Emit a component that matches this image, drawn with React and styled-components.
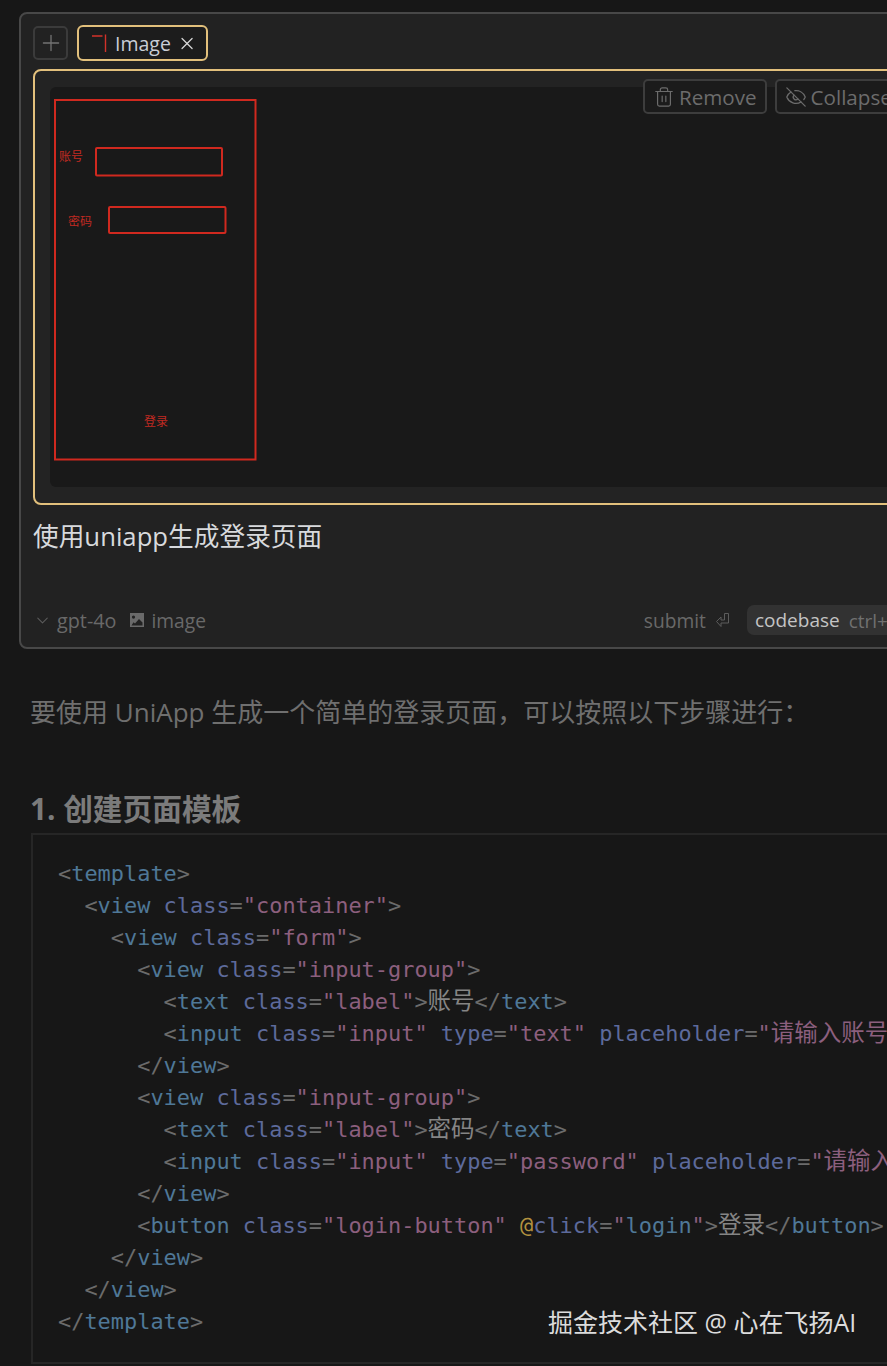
import React from "react";
import styled, { createGlobalStyle } from "styled-components";
import { ChevronDown, EyeOff, Plus, Trash2, X } from "lucide-react";

const UI_FONT = `"Open Sans", "Noto Sans CJK SC", sans-serif`;

const GlobalStyle = createGlobalStyle`
  html, body {
    margin: 0;
    background: #171717;
  }
`;

const tokenColors = {
  punct: "#6b6b6b",
  tag: "#4f7897",
  attr: "#5d6a9b",
  str: "#8c5f7e",
  text: "#858585",
  at: "#b3923f",
};

const codeLines = [
  [["punct", "<"], ["tag", "template"], ["punct", ">"]],
  [["punct", "  <"], ["tag", "view"], ["text", " "], ["attr", "class"], ["punct", "="], ["str", "\"container\""], ["punct", ">"]],
  [["punct", "    <"], ["tag", "view"], ["text", " "], ["attr", "class"], ["punct", "="], ["str", "\"form\""], ["punct", ">"]],
  [["punct", "      <"], ["tag", "view"], ["text", " "], ["attr", "class"], ["punct", "="], ["str", "\"input-group\""], ["punct", ">"]],
  [["punct", "        <"], ["tag", "text"], ["text", " "], ["attr", "class"], ["punct", "="], ["str", "\"label\""], ["punct", ">"], ["text", "账号", true], ["punct", "</"], ["tag", "text"], ["punct", ">"]],
  [["punct", "        <"], ["tag", "input"], ["text", " "], ["attr", "class"], ["punct", "="], ["str", "\"input\""], ["text", " "], ["attr", "type"], ["punct", "="], ["str", "\"text\""], ["text", " "], ["attr", "placeholder"], ["punct", "="], ["str", "\""], ["str", "请输入账号", true], ["str", "\""], ["punct", " />"]],
  [["punct", "      </"], ["tag", "view"], ["punct", ">"]],
  [["punct", "      <"], ["tag", "view"], ["text", " "], ["attr", "class"], ["punct", "="], ["str", "\"input-group\""], ["punct", ">"]],
  [["punct", "        <"], ["tag", "text"], ["text", " "], ["attr", "class"], ["punct", "="], ["str", "\"label\""], ["punct", ">"], ["text", "密码", true], ["punct", "</"], ["tag", "text"], ["punct", ">"]],
  [["punct", "        <"], ["tag", "input"], ["text", " "], ["attr", "class"], ["punct", "="], ["str", "\"input\""], ["text", " "], ["attr", "type"], ["punct", "="], ["str", "\"password\""], ["text", " "], ["attr", "placeholder"], ["punct", "="], ["str", "\""], ["str", "请输入密码", true], ["str", "\""], ["punct", " />"]],
  [["punct", "      </"], ["tag", "view"], ["punct", ">"]],
  [["punct", "      <"], ["tag", "button"], ["text", " "], ["attr", "class"], ["punct", "="], ["str", "\"login-button\""], ["text", " "], ["at", "@"], ["attr", "click"], ["punct", "="], ["str", "\""], ["tag", "login"], ["str", "\""], ["punct", ">"], ["text", "登录", true], ["punct", "</"], ["tag", "button"], ["punct", ">"]],
  [["punct", "    </"], ["tag", "view"], ["punct", ">"]],
  [["punct", "  </"], ["tag", "view"], ["punct", ">"]],
  [["punct", "</"], ["tag", "template"], ["punct", ">"]],
];

export default function App() {
  return (
    <Page>
      <GlobalStyle />
      <Panel>
        <TopRow>
          <AddButton>
            <Plus size={26} strokeWidth={1.2} />
          </AddButton>
          <ImageChip>
            <ChipThumb viewBox="0 0 20 20">
              <path d="M3 3H13.5M16.5 1.5V19" stroke="#d2322a" strokeWidth="1.4" fill="none" />
            </ChipThumb>
            <span>Image</span>
            <X size={23} strokeWidth={1.5} color="#d6d6d6" />
          </ImageChip>
        </TopRow>

        <Editor>
          <ImageHolder>
            <Wireframe viewBox="50 87 220 380">
              <rect x="55" y="100" width="200.5" height="359.5" />
              <rect x="96" y="148" width="126" height="27.5" rx="1" />
              <rect x="109" y="207" width="116.5" height="26" rx="1" />
              <text x="59" y="161">账号</text>
              <text x="68" y="226">密码</text>
              <text x="144" y="426">登录</text>
            </Wireframe>
          </ImageHolder>
          <ImageActions>
            <ActionButton>
              <Trash2 size={22} strokeWidth={1.3} />
              Remove
            </ActionButton>
            <ActionButton>
              <EyeOff size={22} strokeWidth={1.4} />
              Collapse
            </ActionButton>
          </ImageActions>
        </Editor>

        <Prompt>使用uniapp生成登录页面</Prompt>

        <Footer>
          <FooterGroup>
            <ChevronDown size={19} strokeWidth={1.3} color="#5c5c5c" />
            <FooterText>gpt-4o</FooterText>
            <ImageTag>
              <svg width="16" height="16" viewBox="0 0 16 16">
                <path
                  fill="#6a6a6a"
                  d="M1 1h14v14H1z M4.5 3.5a1.6 1.6 0 1 0 0 3.2a1.6 1.6 0 0 0 0-3.2z M2.5 13.5h11v-3L10 7l-4 4.5l-1.5-1.2z"
                  fillRule="evenodd"
                />
              </svg>
              <FooterText $small>image</FooterText>
            </ImageTag>
          </FooterGroup>
          <FooterRight>
            <FooterText $small>submit</FooterText>
            <svg width="16" height="16" viewBox="0 0 16 16">
              <path
                d="M9.5 1.5H13.5V11H6V14.5L1.5 9.5L6 5V8H9.5Z"
                fill="none"
                stroke="#5c5c5c"
                strokeWidth="1"
              />
            </svg>
            <CodebaseChip>
              <b>codebase</b>
              <span>ctrl+⏎</span>
            </CodebaseChip>
          </FooterRight>
        </Footer>
      </Panel>

      <Answer>要使用 UniApp 生成一个简单的登录页面，可以按照以下步骤进行：</Answer>
      <Heading>1. 创建页面模板</Heading>

      <CodeBlock>
        {codeLines.map((line, i) => (
          <CodeLine key={i}>
            {line.map(([kind, value, cjk], j) => (
              <Token key={j} $kind={kind} $cjk={cjk}>
                {value}
              </Token>
            ))}
          </CodeLine>
        ))}
      </CodeBlock>

      <Watermark>掘金技术社区 @ 心在飞扬AI</Watermark>
    </Page>
  );
}

const Page = styled.div`
  position: relative;
  width: 887px;
  height: 1366px;
  overflow: hidden;
  background: #171717;
  padding-top: 12px;
  box-sizing: border-box;
  font-family: ${UI_FONT};
`;

const Panel = styled.div`
  box-sizing: border-box;
  width: 909px;
  height: 637px;
  margin-left: 19px;
  padding: 11px 11px 11px 12px;
  background: #222222;
  border: 2px solid #484848;
  border-radius: 8px;
`;

const TopRow = styled.div`
  display: flex;
  align-items: center;
  gap: 9px;
  height: 36px;
`;

const AddButton = styled.div`
  box-sizing: border-box;
  width: 35px;
  height: 34px;
  display: flex;
  align-items: center;
  justify-content: center;
  border: 2px solid #3b3b3b;
  border-radius: 5px;
  color: #737373;
`;

const ImageChip = styled.div`
  box-sizing: border-box;
  width: 131px;
  height: 36px;
  padding: 0 9px 0 10px;
  display: flex;
  align-items: center;
  gap: 6px;
  background: #1c1c1c;
  border: 2px solid #e2c07c;
  border-radius: 6px;
  font-size: 19.5px;
  color: #c9ced6;
`;

const ChipThumb = styled.svg`
  width: 20px;
  height: 20px;
  flex: none;
`;

const Editor = styled.div`
  position: relative;
  box-sizing: border-box;
  margin-top: 8px;
  height: 436px;
  padding: 16px 15px;
  background: #232323;
  border: 2px solid #e2c07c;
  border-radius: 8px;
`;

const ImageHolder = styled.div`
  height: 400px;
  background: #191919;
  border-radius: 6px;
`;

const Wireframe = styled.svg`
  display: block;
  width: 220px;
  height: 380px;

  rect {
    fill: none;
    stroke: #d0291f;
    stroke-width: 2;
  }

  text {
    fill: #c02a22;
    stroke: none;
    font-size: 12px;
    font-family: "Noto Sans CJK SC", sans-serif;
  }
`;

const ImageActions = styled.div`
  position: absolute;
  top: 8px;
  left: 608px;
  display: flex;
  gap: 8px;
`;

const ActionButton = styled.div`
  box-sizing: border-box;
  height: 35px;
  padding: 0 8px;
  display: flex;
  align-items: center;
  gap: 4px;
  background: #1b1b1b;
  border: 2px solid #3d3d3d;
  border-radius: 5px;
  font-size: 20.6px;
  color: #6c6c6c;
`;

const Prompt = styled.div`
  margin-top: 15px;
  height: 34px;
  line-height: 34px;
  font-size: 25.7px;
  color: #d8dadd;
`;

const Footer = styled.div`
  margin-top: 51px;
  height: 30px;
  display: flex;
  align-items: center;
  justify-content: space-between;
`;

const FooterGroup = styled.div`
  display: flex;
  align-items: center;
  gap: 5px;
`;

const ImageTag = styled.div`
  display: flex;
  align-items: center;
  gap: 6px;
  margin-left: 8px;
`;

const FooterRight = styled.div`
  display: flex;
  align-items: center;
  gap: 9px;
`;

const FooterText = styled.span`
  font-size: ${({ $small }) => ($small ? "19.2px" : "19.8px")};
  color: #696969;
`;

const CodebaseChip = styled.div`
  height: 30px;
  margin-left: 7px;
  padding: 0 8px;
  display: flex;
  align-items: center;
  gap: 9px;
  background: #323232;
  border-radius: 7px;
  font-size: 19px;
  color: #707070;

  b {
    font-weight: 400;
    color: #c4c4c4;
  }
`;

const Answer = styled.p`
  margin: 45px 0 0 30px;
  height: 36px;
  line-height: 36px;
  font-size: 26px;
  white-space: nowrap;
  color: #6f6f6f;
`;

const Heading = styled.h3`
  margin: 59px 0 0 30px;
  height: 40px;
  line-height: 40px;
  font-size: 29.7px;
  font-weight: 700;
  color: #7b7b7b;
`;

const CodeBlock = styled.pre`
  box-sizing: border-box;
  width: 1000px;
  height: 531px;
  margin: 4px 0 0 31px;
  padding: 23px 25px;
  background: #171717;
  border: 2px solid #262626;
  font-family: "DejaVu Sans Mono", "Noto Sans CJK SC", monospace;
  font-size: 21.93px;
`;

const CodeLine = styled.div`
  height: 32px;
  line-height: 32px;
  white-space: pre;
`;

const Token = styled.span`
  color: ${({ $kind }) => tokenColors[$kind]};
  font-size: ${({ $cjk }) => ($cjk ? "23.5px" : "inherit")};
  line-height: ${({ $cjk }) => ($cjk ? "1" : "inherit")};
`;

const Watermark = styled.div`
  position: absolute;
  left: 548px;
  top: 1304px;
  line-height: 36px;
  font-size: 25px;
  white-space: nowrap;
  color: #dcdcdc;
`;
